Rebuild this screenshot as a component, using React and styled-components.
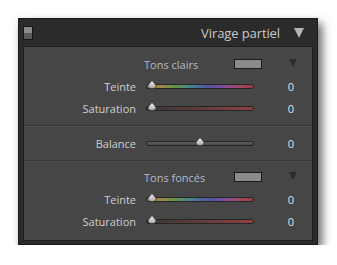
import React from "react";
import styled, { createGlobalStyle } from "styled-components";

const Global = createGlobalStyle`
  body {
    margin: 0;
    background: #ffffff;
    font-family: "Open Sans", "Noto Sans", sans-serif;
  }
`;

const Page = styled.div`
  padding: 18px 0 0 18px;
`;

const Panel = styled.div`
  width: 300px;
  height: 227px;
  box-sizing: border-box;
  background: #2b2b2b;
  border: 1px solid #1c1c1c;
  box-shadow: 4px 5px 9px rgba(0, 0, 0, 0.6);
  display: flex;
  flex-direction: column;
  padding: 0 4px 3px 4px;
`;

const Header = styled.div`
  height: 27px;
  display: flex;
  align-items: center;
  gap: 8px;
`;

const Grip = styled.div`
  width: 8px;
  height: 12px;
  border: 1px solid #141414;
  background: linear-gradient(#8a8a8a 0 50%, #5a5a5a 50% 100%);
  margin-top: 1px;
`;

const Title = styled.div`
  flex: 1;
  text-align: right;
  color: #c9c9c9;
  font-size: 13px;
  letter-spacing: -0.1px;
  padding-right: 2px;
`;

const BigArrow = styled.div`
  width: 0;
  height: 0;
  border-left: 5px solid transparent;
  border-right: 5px solid transparent;
  border-top: 10px solid #b5b5b5;
  margin: 1px 9px 0 4px;
`;

const Inner = styled.div`
  flex: 1;
  background: #464646;
  border: 1px solid #1e1e1e;
  display: flex;
  flex-direction: column;
`;

const Section = styled.div`
  padding: ${(p) => p.$pad};
  border-bottom: ${(p) => (p.$last ? "none" : "1px solid #383838")};
  box-shadow: ${(p) => (p.$last ? "none" : "0 1px 0 #4e4e4e")};
  margin-bottom: ${(p) => (p.$last ? "0" : "1px")};
`;

const Row = styled.div`
  height: 22px;
  display: grid;
  grid-template-columns: 112px 108px 1fr;
  column-gap: 10px;
  align-items: center;
`;

const Label = styled.div`
  text-align: right;
  color: #cfcfcf;
  font-size: 11px;
`;

const Value = styled.div`
  color: #dde2e8;
  font-size: 11px;
  text-align: right;
  padding-right: 18px;
`;

const GroupName = styled.div`
  color: #b3bac6;
  font-size: 11px;
  margin-left: -2px;
  display: flex;
  align-items: center;
  justify-content: space-between;
`;

const Swatch = styled.div`
  width: 26px;
  height: 8px;
  background: #8b8b8b;
  border: 1px solid #1a1a1a;
  margin-right: -8px;
`;

const SmallArrow = styled.div`
  width: 0;
  height: 0;
  border-left: 4px solid transparent;
  border-right: 4px solid transparent;
  border-top: 8px solid #2c2c2c;
  justify-self: end;
  margin-right: 15px;
  margin-top: -2px;
`;

const Track = styled.div`
  position: relative;
  height: 3px;
  border-radius: 2px;
  border: 1px solid #262626;
  background: ${(p) => p.$fill};
  margin-top: 1px;
`;

const Thumb = styled.svg`
  position: absolute;
  top: -5px;
  width: 10px;
  height: 9px;
  margin-left: -5px;
`;

const fills = {
  hue: "linear-gradient(to right, #8e6038, #a08a48, #6a9048, #4a8c80, #4a6aa0, #5a50a0, #8a4c94, #a04860, #9a3c3c)",
  sat: "linear-gradient(to right, #3a3636, #5a3a3a 40%, #904040)",
  plain: "linear-gradient(#5e5e5e, #4a4a4a)",
};

function Slider({ kind, pos }) {
  return (
    <Track $fill={fills[kind]}>
      <Thumb viewBox="0 0 10 9" style={{ left: `calc(${pos}% + ${pos === 0 ? 5 : 0}px)` }}>
        <defs>
          <linearGradient id="tg" x1="0" y1="0" x2="0" y2="1">
            <stop offset="0" stopColor="#f4f4f4" />
            <stop offset="1" stopColor="#a8a8a8" />
          </linearGradient>
        </defs>
        <path d="M5 0.5 L8.8 5 Q9.5 8.5 5 8.5 Q0.5 8.5 1.2 5 Z" fill="url(#tg)" stroke="#2a2a2a" strokeWidth="0.6" />
      </Thumb>
    </Track>
  );
}

function SliderRow({ label, kind, pos }) {
  return (
    <Row>
      <Label>{label}</Label>
      <Slider kind={kind} pos={pos} />
      <Value>0</Value>
    </Row>
  );
}

function GroupRow({ name }) {
  return (
    <Row>
      <span />
      <GroupName>
        {name}
        <Swatch />
      </GroupName>
      <SmallArrow />
    </Row>
  );
}

export default function App() {
  return (
    <Page>
      <Global />
      <Panel>
        <Header>
          <Grip />
          <Title>Virage partiel</Title>
          <BigArrow />
        </Header>
        <Inner>
          <Section $pad="6px 0 6px 0">
            <GroupRow name="Tons clairs" />
            <SliderRow label="Teinte" kind="hue" pos={0} />
            <SliderRow label="Saturation" kind="sat" pos={0} />
          </Section>
          <Section $pad="5px 0 6px 0">
            <SliderRow label="Balance" kind="plain" pos={50} />
          </Section>
          <Section $pad="4px 0 0 0" $last>
            <GroupRow name="Tons foncés" />
            <SliderRow label="Teinte" kind="hue" pos={0} />
            <SliderRow label="Saturation" kind="sat" pos={0} />
          </Section>
        </Inner>
      </Panel>
    </Page>
  );
}
